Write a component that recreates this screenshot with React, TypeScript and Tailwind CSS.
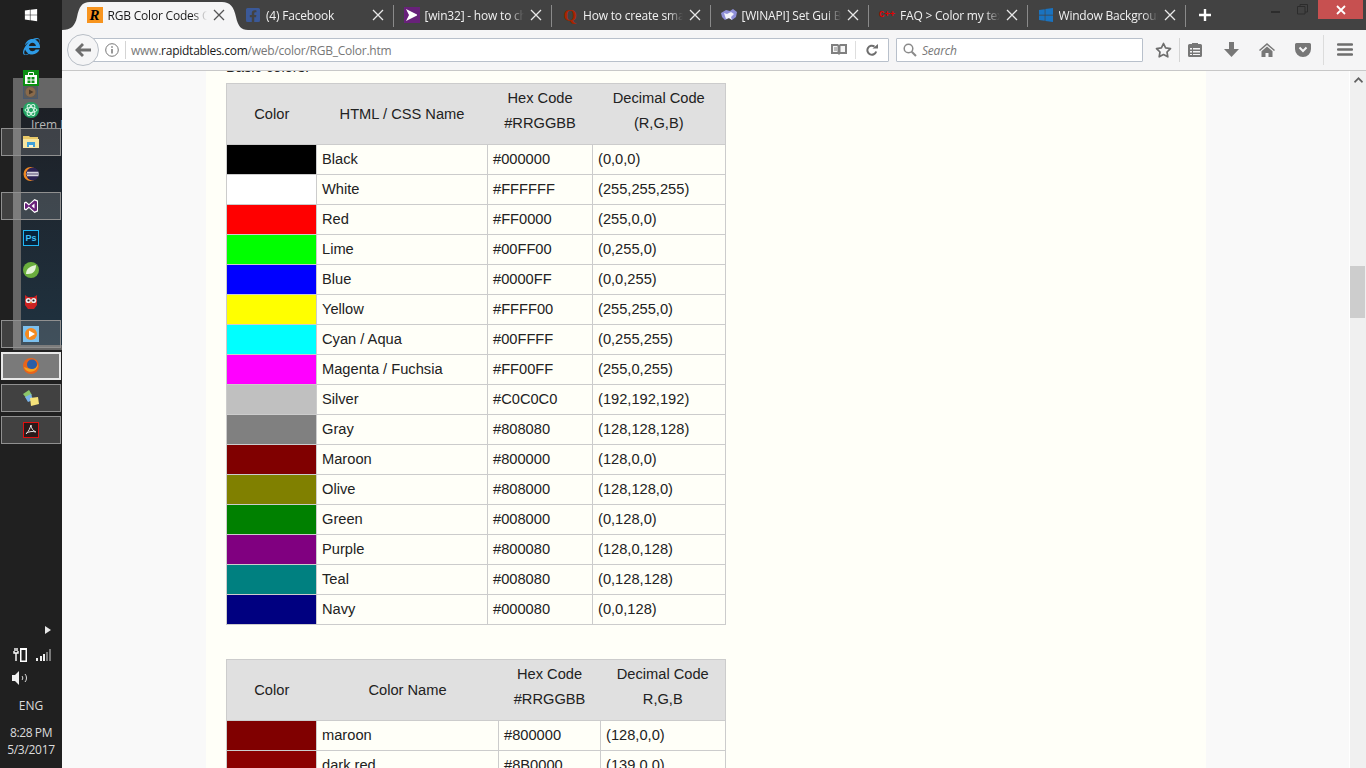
import React from 'react';
import { FaFacebookSquare, FaWindows, FaInternetExplorer } from 'react-icons/fa';

const uiFont = { fontFamily: '"Open Sans", "Noto Sans", sans-serif' };

const basicColors = [
  ['#000000', 'Black', '#000000', '(0,0,0)'],
  ['#FFFFFF', 'White', '#FFFFFF', '(255,255,255)'],
  ['#FF0000', 'Red', '#FF0000', '(255,0,0)'],
  ['#00FF00', 'Lime', '#00FF00', '(0,255,0)'],
  ['#0000FF', 'Blue', '#0000FF', '(0,0,255)'],
  ['#FFFF00', 'Yellow', '#FFFF00', '(255,255,0)'],
  ['#00FFFF', 'Cyan / Aqua', '#00FFFF', '(0,255,255)'],
  ['#FF00FF', 'Magenta / Fuchsia', '#FF00FF', '(255,0,255)'],
  ['#C0C0C0', 'Silver', '#C0C0C0', '(192,192,192)'],
  ['#808080', 'Gray', '#808080', '(128,128,128)'],
  ['#800000', 'Maroon', '#800000', '(128,0,0)'],
  ['#808000', 'Olive', '#808000', '(128,128,0)'],
  ['#008000', 'Green', '#008000', '(0,128,0)'],
  ['#800080', 'Purple', '#800080', '(128,0,128)'],
  ['#008080', 'Teal', '#008080', '(0,128,128)'],
  ['#000080', 'Navy', '#000080', '(0,0,128)'],
];

const moreColors = [
  ['#800000', 'maroon', '#800000', '(128,0,0)'],
  ['#8B0000', 'dark red', '#8B0000', '(139,0,0)'],
];

function CloseX() {
  return (
    <svg width="12" height="12" viewBox="0 0 12 12" className="shrink-0">
      <path d="M1 1l10 10M11 1L1 11" stroke="currentColor" strokeWidth="1.3" fill="none" />
    </svg>
  );
}

function VsFlag({ size = 16, color = '#68217a' }: { size?: number; color?: string }) {
  return (
    <svg width={size} height={size} viewBox="0 0 16 16">
      <rect width="16" height="16" fill={color} />
      <path d="M2 2l11 5.5v1L2 14l3-6z" fill="#fff" />
    </svg>
  );
}

const tabs: { title: string; icon: React.ReactNode }[] = [
  {
    title: 'RGB Color Codes Chart',
    icon: (
      <span className="flex h-4 w-4 items-center justify-center bg-[#f7941e] text-[15px] font-bold italic leading-none text-black [font-family:'Liberation_Serif',serif]">
        R
      </span>
    ),
  },
  { title: '(4) Facebook', icon: <FaFacebookSquare className="h-4 w-4 text-[#3b5998]" /> },
  { title: '[win32] - how to change', icon: <VsFlag /> },
  {
    title: 'How to create small',
    icon: <span className="flex h-4 w-4 items-center justify-center text-[17px] font-bold leading-none text-[#a82400] [font-family:'Liberation_Serif',serif]">Q</span>,
  },
  {
    title: '[WINAPI] Set Gui Back',
    icon: (
      <svg width="16" height="16" viewBox="0 0 16 16">
        <path d="M0 6l5-3 4 1 3-2 4 3-1 5-4 3-3-2-4 2-3-3z" fill="#8f8fd8" />
        <path d="M3 6l3 1 4-2 3 2-3 3 1 3-3-2-3 1z" fill="#f2f2fa" />
      </svg>
    ),
  },
  {
    title: 'FAQ > Color my text',
    icon: <span className="flex h-4 w-4 items-center text-[9px] font-bold leading-none text-[#e00000] [font-family:'Liberation_Mono',monospace]">C++</span>,
  },
  { title: 'Window Background', icon: <FaWindows className="h-4 w-4 text-[#1a73c0]" /> },
];

const taskIcons: { key: string; frame?: 'on' | 'active'; icon: React.ReactNode }[] = [
  { key: 'ie', icon: <FaInternetExplorer className="h-[17px] w-[17px] text-[#2e9be6]" /> },
  {
    key: 'store',
    icon: (
      <svg width="16" height="16" viewBox="0 0 16 16">
        <rect width="16" height="16" fill="#0b8f12" />
        <path d="M2 5h12v9H2z" fill="#fff" />
        <path d="M5.5 5V2.500h5V5" stroke="#fff" fill="none" />
        <path d="M4.500 7h3v2.500h-3zM8.500 7h3v2.500h-3zM4.500 10.500h3V13h-3zM8.500 10.500h3V13h-3z" fill="#0b8f12" />
      </svg>
    ),
  },
  {
    key: 'atom',
    icon: (
      <svg width="16" height="16" viewBox="0 0 16 16">
        <circle cx="8" cy="8" r="8" fill="#23a463" />
        <g stroke="#d8f5e6" strokeWidth="1" fill="none">
          <ellipse cx="8" cy="8" rx="6" ry="2.5" />
          <ellipse cx="8" cy="8" rx="6" ry="2.5" transform="rotate(60 8 8)" />
          <ellipse cx="8" cy="8" rx="6" ry="2.5" transform="rotate(120 8 8)" />
        </g>
      </svg>
    ),
  },
  {
    key: 'explorer',
    frame: 'on',
    icon: (
      <svg width="16" height="16" viewBox="0 0 16 16">
        <path d="M0 2h6l1 1h8v11H0z" fill="#e8c868" />
        <path d="M0 5h16v9H0z" fill="#f8e6a0" />
        <path d="M4 8h8v5H4z" fill="#3fa0d8" />
        <path d="M6 11h4v2H6z" fill="#f3f3e0" />
      </svg>
    ),
  },
  {
    key: 'eclipse',
    icon: (
      <svg width="16" height="16" viewBox="0 0 16 16">
        <circle cx="7.500" cy="8" r="7" fill="#f08a24" />
        <circle cx="9.500" cy="8" r="6.500" fill="#2c2255" />
        <path d="M4 6.300h11.500M3.500 8h12.500M4 9.700h11.500" stroke="#fff" strokeWidth="1" />
      </svg>
    ),
  },
  {
    key: 'vs',
    frame: 'on',
    icon: (
      <svg width="16" height="16" viewBox="0 0 16 16">
        <path d="M11.5 1L15 2.5v11L11.5 15 6 10l-3 2.5L1 11.5v-7L3 3.500 6 6z" fill="#fff" />
        <path d="M11.500 2.500L14 3.500v9l-2.500 1L5.800 8.500 3 11 2 10.500v-5L3 5l2.800 2.500zM11.500 5.500L8.500 8l3 2.500z" fill="#68217a" fillRule="evenodd" />
      </svg>
    ),
  },
  {
    key: 'ps',
    icon: (
      <span className="flex h-4 w-4 items-center justify-center border border-[#1fb6f5] bg-[#06223a] text-[9px] font-bold leading-none text-[#3fc0f8] [font-family:'Liberation_Sans',sans-serif]">
        Ps
      </span>
    ),
  },
  {
    key: 'spring',
    icon: (
      <svg width="16" height="16" viewBox="0 0 16 16">
        <circle cx="8" cy="8" r="8" fill="#6aad3d" />
        <path d="M3 12C3 6 8 4 13 3c0 6-3 9-8 9z" fill="#e4f3d8" />
      </svg>
    ),
  },
  {
    key: 'owl',
    icon: (
      <svg width="16" height="16" viewBox="1 0 14 16">
        <path d="M2 1l3 2h6l3-2v10l-3 4H5l-3-4z" fill="#cc2222" />
        <circle cx="5.300" cy="6.500" r="2.600" fill="#eee" />
        <circle cx="10.700" cy="6.500" r="2.600" fill="#eee" />
        <circle cx="5.500" cy="6.500" r="1.100" fill="#222" />
        <circle cx="10.500" cy="6.500" r="1.100" fill="#222" />
        <path d="M7 8h2l-1 2z" fill="#e8a030" />
      </svg>
    ),
  },
  {
    key: 'wmp',
    frame: 'on',
    icon: (
      <svg width="16" height="16" viewBox="0 0 16 16">
        <rect width="16" height="16" fill="#7cc0ee" />
        <circle cx="8" cy="8" r="6" fill="#f58a1f" />
        <path d="M6 4.500L12 8l-6 3.500z" fill="#fff" />
      </svg>
    ),
  },
  {
    key: 'firefox',
    frame: 'active',
    icon: (
      <svg width="16" height="16" viewBox="0 0 16 16">
        <circle cx="8" cy="8" r="8" fill="#e8641b" />
        <circle cx="9" cy="6.500" r="5" fill="#2a5ea8" />
        <path d="M1 9c1 4 6 6 10 4 3-1.500 4-4 4-7-1 3-3 5-6 5-3 0-5-1-8-2z" fill="#f6a21d" />
      </svg>
    ),
  },
  {
    key: 'stickies',
    frame: 'on',
    icon: (
      <svg width="16" height="16" viewBox="0 0 16 16">
        <path d="M0 4l6-4 3 5-5 4z" fill="#8cc66a" />
        <path d="M2 7l6-3 2 6-5 2z" fill="#7ab4e8" />
        <path d="M7 8l8-1 1 7-8 2z" fill="#f5e27a" />
      </svg>
    ),
  },
  {
    key: 'acrobat',
    frame: 'on',
    icon: (
      <svg width="16" height="16" viewBox="0 0 16 16">
        <rect x="0.500" y="0.500" width="15" height="15" fill="#2a1a1a" stroke="#e01010" />
        <path d="M8 3c-1 3-2 6-5 9M8 3c0 3 2 6 5 7M3.500 11c3-1.500 6-2 9-1" stroke="#e8e8e8" strokeWidth="1" fill="none" />
      </svg>
    ),
  },
];

function Sidebar() {
  return (
    <aside className="relative flex h-[768px] w-[62px] shrink-0 flex-col bg-[#202020]" style={uiFont}>
      {/* ghost of a window showing through the taskbar */}
      <div className="absolute left-[13px] top-[78px] h-[272px] w-[49px] bg-[#666666]" />
      <div className="absolute left-[21px] top-[108px] h-[237px] w-[41px] overflow-hidden bg-gradient-to-b from-[#1d2026] to-[#1f3240]">
        <span className="absolute left-[10px] top-[8px] whitespace-nowrap text-[12px] text-[#b8b8b8]">Irem D</span>
      </div>
      <div className="absolute left-[23px] top-[85px] h-[14px] w-[15px] border border-[#4a5a70] bg-[#5a5a5a]">
        <svg width="13" height="12" viewBox="0 0 13 12">
          <circle cx="6.500" cy="6" r="5" fill="#8a6a4a" />
          <path d="M5 3.500L9.500 6 5 8.500z" fill="#4a3a2a" />
        </svg>
      </div>

      <div className="relative flex h-[30px] items-center justify-center">
        <FaWindows className="h-[14px] w-[14px] text-white" />
      </div>
      {taskIcons.map((t) => (
        <div key={t.key} className="relative flex h-[32px] items-center justify-center">
          <div
            className={
              t.frame === 'on'
                ? 'flex h-[28px] w-[60px] items-center justify-center border border-[#909090] bg-[#ffffff]/15'
                : t.frame === 'active'
                  ? 'flex h-[28px] w-[60px] items-center justify-center border-2 border-[#e8e8e8] bg-[#7a7a7a]'
                  : 'flex h-[28px] w-[60px] items-center justify-center'
            }
          >
            {t.icon}
          </div>
        </div>
      ))}

      <div className="relative mt-auto flex flex-col items-center pb-[10px] text-[#dcdcdc]">
        <svg width="6" height="8" viewBox="0 0 6 8" className="ml-[34px]">
          <path d="M0 0l6 4-6 4z" fill="#e8e8e8" />
        </svg>
        <div className="mt-[13px] flex h-[16px] items-center gap-[9px]">
          <svg width="14" height="16" viewBox="0 0 14 16" className="ml-[2px]">
            <path d="M1 4v2h4V4M3 6v8M2 1v3M4 1v3" stroke="#fff" fill="none" strokeWidth="1.400" />
            <rect x="7" y="1" width="7" height="14" fill="#fff" />
            <rect x="8.500" y="3" width="4" height="10.500" fill="#202020" />
          </svg>
          <svg width="16" height="12" viewBox="0 0 16 12">
            <path d="M0 9h2v3H0zM4 7h2v5H4zM7 5h2v7H7z" fill="#f0f0f0" />
            <path d="M10 3h2v9h-2zM13 0h2v12h-2z" fill="#7a7a7a" />
          </svg>
        </div>
        <div className="mt-[7px] flex h-[16px] w-full items-center pl-[12px]">
          <svg width="16" height="14" viewBox="0 0 16 14">
            <path d="M0 4h3l4-4v14l-4-4H0z" fill="#f0f0f0" />
            <path d="M10 5c1 1 1 3 0 4M13 3c2 2 2 6 0 8" stroke="#dcdcdc" fill="none" />
          </svg>
        </div>
        <div className="mt-[12px] text-[12px] leading-[16px]">ENG</div>
        <div className="mt-[10px] text-[12px] leading-[17px] tracking-[-0.4px]">8:28 PM</div>
        <div className="text-[12px] leading-[17px] tracking-[-0.3px]">5/3/2017</div>
      </div>
    </aside>
  );
}

function TabStrip() {
  return (
    <div className="relative flex h-[30px] items-stretch bg-[#424242] pl-[14.5px]" style={uiFont}>
      {/* active tab shape */}
      <svg width="186" height="30" viewBox="0 0 186 30" className="absolute left-0 top-0">
        <path d="M0 30C9 30 13 26 15 17 17 7 20 2 28 2H160c8 0 12 5 14 15 2 9 5 13 12 13z" fill="#f5f5f6" />
      </svg>
      {tabs.map((t, i) => (
        <div
          key={t.title}
          className={
            'relative flex w-[158.5px] shrink-0 items-center pl-[10px] pr-[10px] ' +
            (i === 0 ? 'text-[#1a1a1a]' : 'text-[#f0f0f0]')
          }
        >
          <span className="flex h-4 w-4 shrink-0 items-center justify-center">{t.icon}</span>
          <span className="ml-[5px] mr-[6px] min-w-0 flex-1 overflow-hidden whitespace-nowrap pt-px text-[12px] leading-[30px] tracking-[-0.2px] [mask-image:linear-gradient(to_right,black_85%,transparent)]">
            {t.title}
          </span>
          <span className={i === 0 ? 'text-[#555]' : 'text-[#e8e8e8]'}>
            <CloseX />
          </span>
          {i > 0 && <span className="absolute right-0 top-[5px] h-[22px] w-px bg-[#8a8a8a]" />}
        </div>
      ))}
      <div className="relative ml-[9px] flex w-[20px] items-center justify-center text-white">
        <svg width="14" height="14" viewBox="0 0 14 14">
          <path d="M7 1v12M1 7h12" stroke="#fff" strokeWidth="2.400" />
        </svg>
      </div>
      <div className="absolute right-[3px] top-0 flex h-[19px] items-start">
        <span className="mr-[17px] mt-[11px] h-[2px] w-[9px] bg-[#2c2c2c]" />
        <svg width="11" height="11" viewBox="0 0 11 11" className="mr-[10px] mt-[4px]">
          <path d="M3 2.500V.500h7.500V8H8M.5 2.500H8V10H.5z" stroke="#2c2c2c" fill="none" />
        </svg>
        <div className="flex h-[19px] w-[45px] items-center justify-center bg-[#c75050]">
          <svg width="10" height="10" viewBox="0 0 10 10">
            <path d="M1 1l8 8M9 1L1 9" stroke="#fff" strokeWidth="1.800" />
          </svg>
        </div>
      </div>
    </div>
  );
}

function Toolbar() {
  return (
    <div className="flex h-[41px] items-center border-b border-[#c8c8c8] bg-[#f5f5f6] pb-px pl-[5px] pr-0" style={uiFont}>
      <div className="relative z-10 flex h-[32px] w-[32px] shrink-0 items-center justify-center rounded-full border border-[#b8bec6] bg-[#f5f5f6]">
        <svg width="16" height="14" viewBox="0 0 16 14">
          <path d="M7 0L0 7l7 7 2-2-3.500-3.500H16v-3H5.500L9 2z" fill="#6e6e6e" />
        </svg>
      </div>
      <div className="-ml-[10px] flex h-[24px] w-[800px] shrink-0 items-center rounded-[1px] border border-[#b8c0cb] bg-white pl-[13px]">
        <svg width="14" height="14" viewBox="0 0 14 14" className="ml-[2px]">
          <circle cx="7" cy="7" r="6.300" stroke="#777" fill="none" />
          <path d="M7 6v4.500M7 3.200v1.600" stroke="#777" strokeWidth="1.500" />
        </svg>
        <span className="ml-[6px] h-[18px] w-px bg-[#d4d4d4]" />
        <span className="ml-[5px] flex-1 whitespace-nowrap pt-[2px] text-[12px] tracking-[-0.25px] text-[#777]">
          www.<span className="text-[#1a1a1a]">rapidtables.com</span>/web/color/RGB_Color.htm
        </span>
        <svg width="16" height="13" viewBox="0 0 16 13" className="mr-[8px]">
          <path d="M0 1h7l1 1 1-1h7v10H9l-1 1-1-1H0z" fill="#808080" />
          <path d="M2 3h4.500v6H2zM9.500 3H14v6H9.500z" fill="#f5f5f5" />
          <path d="M3 5h3M3 7h3" stroke="#808080" />
        </svg>
        <span className="h-[18px] w-px bg-[#dedede]" />
        <svg width="12" height="12" viewBox="0 0 12 12" className="ml-[10px] mr-[10px]">
          <path d="M10.200 7.500A4.500 4.500 0 1 1 8.500 2.500" stroke="#6e6e6e" strokeWidth="2" fill="none" />
          <path d="M6.500 4.500H12V0z" fill="#6e6e6e" />
        </svg>
      </div>
      <div className="ml-[7px] flex h-[24px] w-[247px] shrink-0 items-center rounded-[1px] border border-[#b8c0cb] bg-white pl-[6px]">
        <svg width="14" height="14" viewBox="0 0 14 14">
          <circle cx="5.500" cy="5.500" r="4.300" stroke="#8a8a8a" strokeWidth="1.500" fill="none" />
          <path d="M8.700 8.700L13 13" stroke="#8a8a8a" strokeWidth="2" />
        </svg>
        <span className="ml-[5px] pt-[2px] text-[12px] italic tracking-[-0.2px] text-[#777]">Search</span>
      </div>
      <div className="ml-[4px] flex h-[24px] w-[33px] shrink-0 items-center justify-center border-r border-[#d4d4d4]">
        <svg width="17" height="16" viewBox="0 0 17 16">
          <path d="M8.500 1.500l2.100 4.400 4.900.7-3.500 3.400.8 4.800-4.300-2.300-4.300 2.300.8-4.800L1.500 6.600l4.900-.7z" stroke="#6e6e6e" strokeWidth="1.700" fill="none" strokeLinejoin="round" />
        </svg>
      </div>
      <div className="flex w-[30px] shrink-0 items-center justify-center">
        <svg width="14" height="15" viewBox="0 0 14 15">
          <path d="M1.500 2H4V1h6v1h2.500A1.500 1.500 0 0 1 14 3.500v10a1.500 1.500 0 0 1-1.500 1.500h-11A1.500 1.500 0 0 1 0 13.500v-10A1.500 1.500 0 0 1 1.500 2z" fill="#777" />
          <path d="M2 6h2v1.500H2zM5 6h7v1.500H5zM2 9h2v1.500H2zM5 9h7v1.500H5zM2 12h2v1H2zM5 12h7v1H5z" fill="#f5f5f6" />
        </svg>
      </div>
      <div className="ml-[3px] flex w-[36px] shrink-0 items-center justify-center">
        <svg width="15" height="15" viewBox="0 0 15 15">
          <path d="M5 0h5v7h5l-7.500 8L0 7h5z" fill="#777" />
        </svg>
      </div>
      <div className="flex w-[36px] shrink-0 items-center justify-center">
        <svg width="16" height="14" viewBox="0 0 16 14">
          <path d="M8 0l8 7-1 1-7-6-7 6-1-1z" fill="#777" />
          <path d="M8 3.500l5.500 4.700V14H9.500v-4h-3v4h-4V8.200z" fill="#777" />
        </svg>
      </div>
      <div className="flex w-[36px] shrink-0 items-center justify-center">
        <svg width="16" height="14" viewBox="0 0 16 14">
          <path d="M1.500 0h13A1.500 1.500 0 0 1 16 1.500V6a8 8 0 0 1-16 0V1.500A1.500 1.500 0 0 1 1.500 0z" fill="#777" />
          <path d="M4.500 4.500L8 8l3.500-3.500" stroke="#f5f5f6" strokeWidth="2" fill="none" />
        </svg>
      </div>
      <span className="ml-[2px] h-[30px] w-px shrink-0 bg-[#dcdcdc]" />
      <div className="flex w-[42px] shrink-0 items-center justify-center">
        <svg width="16" height="13" viewBox="0 0 16 13">
          <path d="M1 1.500h14M1 6.500h14M1 11.500h14" stroke="#6e6e6e" strokeWidth="2.400" strokeLinecap="round" />
        </svg>
      </div>
    </div>
  );
}

function ColorTable({
  cols,
  nameHead,
  decHead,
  rows,
}: {
  cols: string[];
  nameHead: string;
  decHead: string;
  rows: string[][];
}) {
  return (
    <table className="w-[499px] table-fixed border-collapse border border-[#cccccc] text-[14.67px] leading-[18px] text-[#222222]">
      <colgroup>
        {cols.map((c) => (
          <col key={c} className={c} />
        ))}
      </colgroup>
      <thead>
        <tr className="h-[61px] bg-[#e0e0e0]">
          <th className="text-center font-normal">Color</th>
          <th className="text-center font-normal">{nameHead}</th>
          <th className="pb-[7px] text-center font-normal leading-[25px]">
            Hex Code
            <br />
            #RRGGBB
          </th>
          <th className="pb-[7px] text-center font-normal leading-[25px]">
            Decimal Code
            <br />
            {decHead}
          </th>
        </tr>
      </thead>
      <tbody>
        {rows.map((r) => (
          <tr key={r[1]} className="h-[30px]">
            <td className="border border-[#cccccc]" style={{ backgroundColor: r[0] }} />
            <td className="border border-[#cccccc] px-[5px] pb-[2px]">{r[1]}</td>
            <td className="border border-[#cccccc] px-[5px] pb-[2px]">{r[2]}</td>
            <td className="border border-[#cccccc] px-[5px] pb-[2px]">{r[3]}</td>
          </tr>
        ))}
      </tbody>
    </table>
  );
}

export default function App() {
  return (
    <div className="flex h-[768px] w-[1366px] overflow-hidden [font-family:'Liberation_Sans',Arial,sans-serif]">
      <Sidebar />
      <div className="flex min-w-0 flex-1 flex-col">
        <TabStrip />
        <Toolbar />
        <div className="flex min-h-0 flex-1">
          <main className="min-w-0 flex-1 overflow-hidden bg-[#f9f9f9] pl-[144px]">
            <div className="flow-root h-full w-[1000px] overflow-hidden bg-[#fffff8] px-[20px]">
              <p className="-mt-[13px] mb-[7px] text-[14.67px] leading-[18px] text-[#222222]">Basic colors:</p>
              <ColorTable
                cols={['w-[90px]', 'w-[171px]', 'w-[105px]', 'w-[133px]']}
                nameHead="HTML / CSS Name"
                decHead="(R,G,B)"
                rows={basicColors}
              />
              <div className="h-[34px]" />
              <ColorTable
                cols={['w-[90px]', 'w-[182px]', 'w-[102px]', 'w-[125px]']}
                nameHead="Color Name"
                decHead="R,G,B"
                rows={moreColors}
              />
            </div>
          </main>
          <div className="flex w-[17px] shrink-0 flex-col border-l border-[#ffffff] bg-[#f0f0f0]">
            <div className="flex h-[18px] items-center justify-center">
              <svg width="9" height="6" viewBox="0 0 9 6">
                <path d="M4.500 0L9 4.500 8 6 4.500 2.500 1 6 0 4.500z" fill="#606060" />
              </svg>
            </div>
            <div className="mt-[177px] h-[52px] w-[15px] bg-[#cdcdcd]" />
          </div>
        </div>
      </div>
    </div>
  );
}
